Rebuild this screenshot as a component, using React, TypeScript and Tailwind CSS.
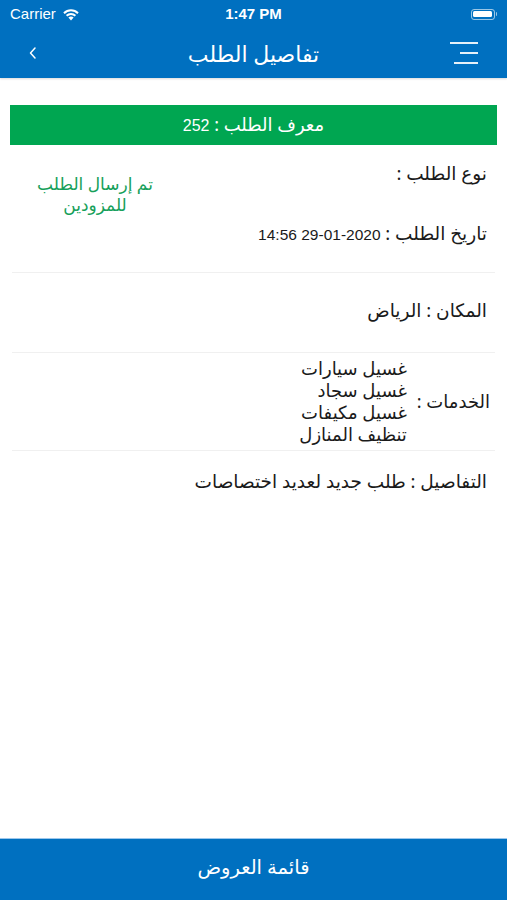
import React from "react";

export default function App() {
  const font = { fontFamily: '"Noto Sans", "DejaVu Sans", sans-serif' };
  const num = { fontFamily: '"Liberation Sans", "Noto Sans", sans-serif' };
  return (
    <div className="w-[507px] h-[900px] bg-white flex flex-col overflow-hidden" style={font}>
      {/* Header */}
      <div className="bg-[#0070c0] h-[78px] flex flex-col text-white shadow-[0_1px_2px_rgba(0,0,0,0.15)]">
        <div className="h-[28px] flex items-center justify-between px-[10px] relative" style={{ fontFamily: '"Liberation Sans", sans-serif' }}>
          <div className="flex items-center gap-[6px] text-[15px]">
            <span>Carrier</span>
            <svg width="18" height="13" viewBox="0 0 18 13">
              <path d="M9 12.5 L11.6 9.6 A3.8 3.8 0 0 0 6.4 9.6 Z" fill="white" />
              <path d="M3.9 7.1 A7.3 7.3 0 0 1 14.1 7.1 L12.7 8.6 A5.3 5.3 0 0 0 5.3 8.6 Z" fill="white" />
              <path d="M1.3 4.4 A11 11 0 0 1 16.7 4.4 L15.3 5.9 A9 9 0 0 0 2.7 5.9 Z" fill="white" />
            </svg>
          </div>
          <div className="absolute left-0 right-0 text-center text-[15px] font-bold pointer-events-none">1:47 PM</div>
          <div className="flex items-center gap-[1px] mr-[0px]">
            <div className="w-[24px] h-[11px] rounded-[3px] border border-white/60 p-[1.5px]">
              <div className="w-full h-full bg-white rounded-[1.5px]" />
            </div>
            <div className="w-[1.5px] h-[4px] bg-white/60 rounded-r" />
          </div>
        </div>
        <div className="flex-1 flex items-center justify-between relative">
          <div className="w-[60px] flex justify-center pl-[6px]">
            <svg width="10" height="14" viewBox="0 0 10 14">
              <path d="M7 2 L2.5 7 L7 12" stroke="white" strokeWidth="1.5" fill="none" strokeLinecap="round" strokeLinejoin="round" />
            </svg>
          </div>
          <div className="absolute left-0 right-0 text-center text-[22px] leading-[28px] pointer-events-none" dir="rtl">تفاصيل الطلب</div>
          <div className="w-[60px] flex flex-col items-end gap-[8px] pr-[29px]">
            <div className="w-[28px] h-[2px] bg-white/90" />
            <div className="w-[18px] h-[2px] bg-white/90" />
            <div className="w-[24px] h-[2px] bg-white/90" />
          </div>
        </div>
      </div>

      {/* Content */}
      <div className="flex-1 flex flex-col" dir="rtl">
        <div className="mt-[27px] mx-[10px] h-[40px] bg-[#00a651] text-white text-[18px] leading-[24px] flex items-center justify-center">
          <div>
            معرف الطلب : <span className="text-[16px]" style={num}>252</span>
          </div>
        </div>

        {/* Section 1 */}
        <div className="mx-[12px] border-b border-[#f0f0f0] pr-[8px]">
          <div className="flex justify-between pt-[15px]">
            <div className="text-[18.5px] leading-[26px] text-[#1a1a1a]">نوع الطلب :</div>
            <div className="mt-[13px] ml-[18px] w-[130px] text-center text-[17px] leading-[21px] text-[#16a05a]">
              <div>تم إرسال الطلب</div>
              <div>للمزودين</div>
            </div>
          </div>
          <div className="mt-[5px] mb-[24px] text-[18.5px] leading-[26px] text-[#1a1a1a]">
            تاريخ الطلب : <span className="text-[15.5px] font-medium" style={num}>2020-01-29 14:56</span>
          </div>
        </div>

        {/* Location */}
        <div className="mx-[12px] border-b border-[#f0f0f0] pr-[8px] pt-[24px] pb-[29px]">
          <div className="text-[18.5px] leading-[26px] text-[#1a1a1a]">المكان : الرياض</div>
        </div>

        {/* Services */}
        <div className="mx-[12px] border-b border-[#f0f0f0] pr-[5px] pt-[4px] pb-[5px] flex items-center gap-[10px]">
          <div className="text-[18px] leading-[24px] text-[#1a1a1a]">الخدمات :</div>
          <div className="text-[18px] leading-[22px] text-[#1a1a1a]">
            <div>غسيل سيارات</div>
            <div>غسيل سجاد</div>
            <div>غسيل مكيفات</div>
            <div>تنظيف المنازل</div>
          </div>
        </div>

        {/* Details */}
        <div className="mx-[12px] pr-[8px] pt-[17px]">
          <div className="text-[18.5px] leading-[26px] text-[#1a1a1a]">التفاصيل : طلب جديد لعديد اختصاصات</div>
        </div>
      </div>

      {/* Bottom bar */}
      <div className="h-[62px] bg-[#0070c0] border-t border-[#9cc7ec] flex items-center justify-center pb-[6px] text-white text-[19.5px]" dir="rtl">
        قائمة العروض
      </div>
    </div>
  );
}
